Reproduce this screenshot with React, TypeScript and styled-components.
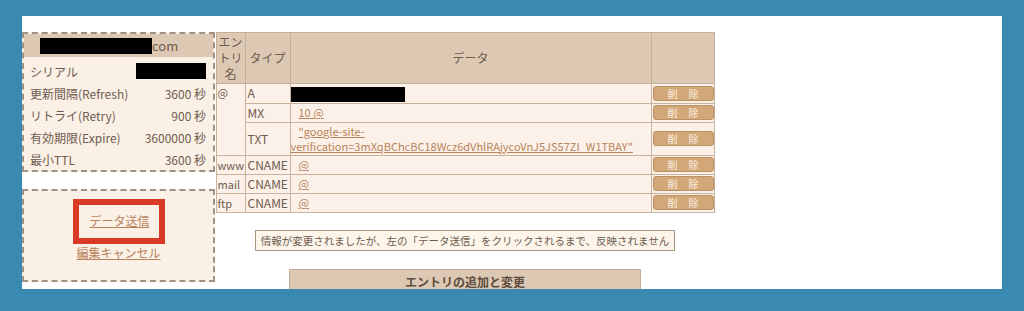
import React from 'react';
import styled, { createGlobalStyle } from 'styled-components';

const GlobalStyle = createGlobalStyle`
    html, body {
        margin: 0;
        padding: 0;
        background: #3a89b0;
    }
    body {
        font-family: "Noto Sans CJK JP", "Noto Sans", sans-serif;
        color: #6e5c50;
    }
`;

const Page = styled.div`
    width: 1024px;
    height: 311px;
    padding: 16px 0 0 22px;
    box-sizing: border-box;
`;

const Sheet = styled.div`
    width: 980px;
    height: 273px;
    background: #fff;
    overflow: hidden;
    display: flex;
    align-items: flex-start;
    padding-top: 16px;
    box-sizing: border-box;
`;

const Side = styled.div`
    width: 193px;
    display: flex;
    flex-direction: column;
    gap: 17px;
`;

const DashedBox = styled.div`
    border: 2px dashed #a09184;
    background: #fbf0e6;
    box-sizing: border-box;
`;

const ZoneHead = styled.div`
    height: 23px;
    background: #dcc8b3;
    display: flex;
    align-items: center;
    padding-left: 16px;
    font-size: 13px;
    margin-bottom: 3px;
`;

const Redacted = styled.span<{ $w: number; $h: number }>`
    display: inline-block;
    width: ${(p) => p.$w}px;
    height: ${(p) => p.$h}px;
    background: #000;
    vertical-align: middle;
`;

const InfoRow = styled.div`
    height: 22px;
    display: flex;
    align-items: center;
    justify-content: space-between;
    padding: 0 7px 0 6px;
    font-size: 12px;
`;

const SubmitBox = styled(DashedBox)`
    height: 93px;
    display: flex;
    flex-direction: column;
    align-items: center;
    padding-top: 8px;
`;

const Highlight = styled.div`
    width: 92px;
    height: 45px;
    border: 6px solid #d93a26;
    box-sizing: border-box;
    display: flex;
    align-items: center;
    justify-content: center;
    padding: 0 0 3px 2px;
`;

const TextLink = styled.a`
    color: #b8835c;
    text-decoration: underline;
    font-size: 12px;
    cursor: pointer;
`;

const DataLink = styled(TextLink)`
    font-size: 11px;
    line-height: 15px;
`;

const CancelLink = styled(TextLink)`
    margin-top: 0;
`;

const Main = styled.div`
    margin-left: 1px;
    width: 498px;
    display: flex;
    flex-direction: column;
    align-items: center;
`;

const Table = styled.table`
    width: 498px;
    border-collapse: collapse;
    table-layout: fixed;
    font-size: 12px;
    border: 1px solid #c4af98;

    th {
        background: #dcc8b3;
        font-weight: normal;
        border: 1px solid #c4af98;
        color: #6e5c50;
        line-height: 16px;
        padding: 0;
    }
    td {
        background: #fcf1e8;
        border: 1px solid #c9b39c;
        line-height: 14px;
        height: 16px;
        padding: 1px 2px;
        vertical-align: middle;
        white-space: nowrap;
    }
`;

const NameCell = styled.td<{ $top?: boolean }>`
    vertical-align: ${(p) => (p.$top ? 'top' : 'middle')} !important;
    padding: 1px 1px !important;
    font-size: 11px;
    overflow: hidden;
`;

const DataCell = styled.td<{ $indent: boolean }>`
    padding: 1px 0 1px 0 !important;
    text-indent: ${(p) => (p.$indent ? '8px' : '0')};
    white-space: normal !important;
    font-size: 11px;
`;

const ButtonCell = styled.td`
    padding: 0 1px !important;
    text-align: center;
`;

const DeleteButton = styled.button`
    width: 61px;
    height: 15px;
    border: 1px solid #bb9166;
    border-radius: 3px;
    background: #d3a878;
    color: #fbf1e4;
    font-family: "Noto Sans CJK JP", sans-serif;
    font-size: 10px;
    letter-spacing: 11px;
    padding: 0 0 0 11px;
    line-height: 13px;
    display: block;
`;

const Notice = styled.div`
    margin-top: 17px;
    border: 1px solid #a89584;
    background: #fdf4ea;
    padding: 2px 5px;
    font-size: 10.5px;
    line-height: 15px;
`;

const SectionHead = styled.div`
    margin-top: 18px;
    width: 352px;
    height: 40px;
    background: #dcc8b3;
    border: 1px solid #c4af98;
    display: flex;
    justify-content: center;
    padding-top: 3px;
    box-sizing: border-box;
    font-size: 12px;
    font-weight: bold;
    color: #5e4c40;
`;

type Rec = { name?: string; rowSpan?: number; type: string; data: React.ReactNode; link: boolean };

const records: Rec[] = [
    { name: '@', rowSpan: 3, type: 'A', data: <Redacted $w={114} $h={15} />, link: false },
    { type: 'MX', data: <DataLink>10 @</DataLink>, link: true },
    {
        type: 'TXT',
        data: (
            <DataLink>
                "google-site-
                verification=3mXqBChcBC18Wcz6dVhlRAjycoVnJ5JS57ZI_W1TBAY"
            </DataLink>
        ),
        link: true,
    },
    { name: 'www', type: 'CNAME', data: <DataLink>@</DataLink>, link: true },
    { name: 'mail', type: 'CNAME', data: <DataLink>@</DataLink>, link: true },
    { name: 'ftp', type: 'CNAME', data: <DataLink>@</DataLink>, link: true },
];

const soa = [
    ['更新間隔(Refresh)', '3600 秒'],
    ['リトライ(Retry)', '900 秒'],
    ['有効期限(Expire)', '3600000 秒'],
    ['最小TTL', '3600 秒'],
];

const App: React.FC = () => {
    return (
        <Page>
            <GlobalStyle />
            <Sheet>
                <Side>
                    <DashedBox>
                        <ZoneHead>
                            <Redacted $w={112} $h={16} />
                            <span>com</span>
                        </ZoneHead>
                        <InfoRow>
                            <span>シリアル</span>
                            <Redacted $w={70} $h={16} />
                        </InfoRow>
                        {soa.map(([label, value]) => (
                            <InfoRow key={label}>
                                <span>{label}</span>
                                <span>{value}</span>
                            </InfoRow>
                        ))}
                    </DashedBox>
                    <SubmitBox>
                        <Highlight>
                            <TextLink>データ送信</TextLink>
                        </Highlight>
                        <CancelLink>編集キャンセル</CancelLink>
                    </SubmitBox>
                </Side>
                <Main>
                    <Table>
                        <colgroup>
                            <col style={{ width: 29 }} />
                            <col style={{ width: 45 }} />
                            <col style={{ width: 361 }} />
                            <col style={{ width: 63 }} />
                        </colgroup>
                        <thead>
                            <tr style={{ height: 51 }}>
                                <th>エン<br />トリ<br />名</th>
                                <th>タイプ</th>
                                <th>データ</th>
                                <th></th>
                            </tr>
                        </thead>
                        <tbody>
                            {records.map((r, i) => (
                                <tr key={i}>
                                    {r.name !== undefined && (
                                        <NameCell rowSpan={r.rowSpan} $top={!!r.rowSpan}>
                                            {r.name}
                                        </NameCell>
                                    )}
                                    <td>{r.type}</td>
                                    <DataCell $indent={r.link}>{r.data}</DataCell>
                                    <ButtonCell>
                                        <DeleteButton>削除</DeleteButton>
                                    </ButtonCell>
                                </tr>
                            ))}
                        </tbody>
                    </Table>
                    <Notice>情報が変更されましたが、左の「データ送信」をクリックされるまで、反映されません</Notice>
                    <SectionHead>エントリの追加と変更</SectionHead>
                </Main>
            </Sheet>
        </Page>
    );
};

export default App;
